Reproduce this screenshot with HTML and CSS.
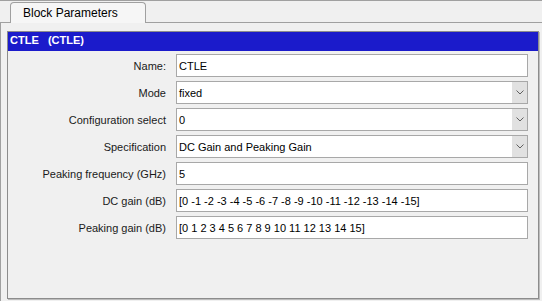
FILE: index.html
```html
<!DOCTYPE html>
<html>
<head>
<meta charset="utf-8">
<link rel="stylesheet" href="styles.css">
</head>
<body>
<div class="window">
  <div class="tabbar">
    <div class="tab">Block Parameters</div>
  </div>
  <div class="content">
    <div class="panel">
      <div class="header">CTLE   (CTLE)</div>
      <div class="form">
        <div class="row"><div class="label">Name:</div><div class="field">CTLE</div></div>
        <div class="row"><div class="label">Mode</div><div class="field select"><span class="val">fixed</span><span class="btn"><svg width="8" height="5" viewBox="0 0 8 5"><path d="M0.5 0.5 L4 4 L7.5 0.5" fill="none" stroke="#606060" stroke-width="1"/></svg></span></div></div>
        <div class="row"><div class="label">Configuration select</div><div class="field select"><span class="val">0</span><span class="btn"><svg width="8" height="5" viewBox="0 0 8 5"><path d="M0.5 0.5 L4 4 L7.5 0.5" fill="none" stroke="#606060" stroke-width="1"/></svg></span></div></div>
        <div class="row"><div class="label">Specification</div><div class="field select"><span class="val">DC Gain and Peaking Gain</span><span class="btn"><svg width="8" height="5" viewBox="0 0 8 5"><path d="M0.5 0.5 L4 4 L7.5 0.5" fill="none" stroke="#606060" stroke-width="1"/></svg></span></div></div>
        <div class="row"><div class="label">Peaking frequency (GHz)</div><div class="field">5</div></div>
        <div class="row"><div class="label">DC gain (dB)</div><div class="field">[0 -1 -2 -3 -4 -5 -6 -7 -8 -9 -10 -11 -12 -13 -14 -15]</div></div>
        <div class="row"><div class="label">Peaking gain (dB)</div><div class="field">[0 1 2 3 4 5 6 7 8 9 10 11 12 13 14 15]</div></div>
      </div>
    </div>
  </div>
</div>
</body>
</html>
```

FILE: styles.css
```css
html, body {
  margin: 0;
  padding: 0;
  background: #f0f0f0;
}
.window {
  width: 542px;
  height: 301px;
  box-sizing: border-box;
  border-top: 1px solid #a0a0a0;
  display: flex;
  flex-direction: column;
  font-family: "Liberation Sans", Arial, sans-serif;
  font-size: 11px;
  color: #000;
}
.tabbar {
  height: 22px;
  box-sizing: border-box;
  border-bottom: 1px solid #a0a0a0;
  padding: 1px 0 0 10px;
  display: flex;
}
.tab {
  width: 136px;
  height: 21px;
  box-sizing: border-box;
  border: 1px solid #a0a0a0;
  border-bottom: none;
  border-radius: 4px 4px 0 0;
  background: #f6f6f6;
  margin-bottom: -1px;
  font-size: 12px;
  padding: 3px 0 0 12px;
}
.content {
  flex: 1;
  border-left: 1px solid #a0a0a0;
  padding: 8px 0 0 6px;
}
.panel {
  width: 532px;
  height: 268px;
  box-sizing: border-box;
  border: 1px solid #8c8c8c;
  box-shadow: 1px 1px 0 #bdbdbd;
  background: #f0f0f0;
}
.header {
  height: 19px;
  background: #1b1bcb;
  color: #fff;
  font-weight: bold;
  white-space: pre;
  padding: 2px 0 0 2px;
  box-sizing: border-box;
}
.form {
  padding: 3px 10px 0 0;
  display: flex;
  flex-direction: column;
  gap: 4px;
}
.row {
  display: flex;
  align-items: center;
  gap: 10px;
  height: 23px;
}
.label {
  width: 158px;
  text-align: right;
  color: #1a1a1a;
}
.field {
  flex: 1;
  height: 23px;
  box-sizing: border-box;
  border: 1px solid #a8a8a8;
  background: #fff;
  padding: 0 0 0 2px;
  display: flex;
  align-items: center;
}
.select .val {
  flex: 1;
}
.btn {
  width: 15px;
  height: 21px;
  background: #e1e1e1;
  display: flex;
  align-items: center;
  justify-content: center;
}
```
